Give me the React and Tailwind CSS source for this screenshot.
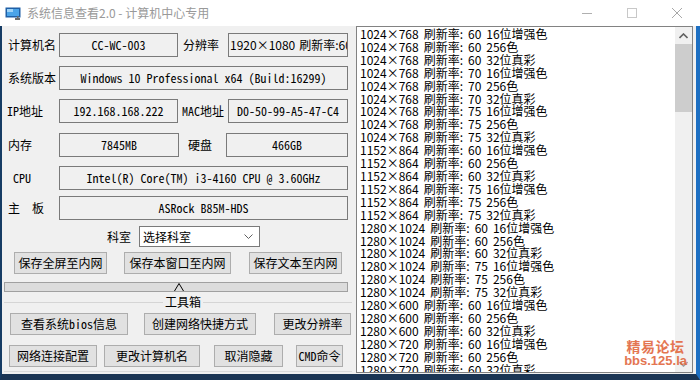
import React from "react";

const sans = "font-['Noto_Sans_CJK_SC',sans-serif]";
const mono = "font-['Noto_Sans_Mono_CJK_SC','DejaVu_Sans_Mono',monospace]";

const modes = [
  ["1024", "768", "60", "16位增强色"],
  ["1024", "768", "60", "256色"],
  ["1024", "768", "60", "32位真彩"],
  ["1024", "768", "70", "16位增强色"],
  ["1024", "768", "70", "256色"],
  ["1024", "768", "70", "32位真彩"],
  ["1024", "768", "75", "16位增强色"],
  ["1024", "768", "75", "256色"],
  ["1024", "768", "75", "32位真彩"],
  ["1152", "864", "60", "16位增强色"],
  ["1152", "864", "60", "256色"],
  ["1152", "864", "60", "32位真彩"],
  ["1152", "864", "75", "16位增强色"],
  ["1152", "864", "75", "256色"],
  ["1152", "864", "75", "32位真彩"],
  ["1280", "1024", "60", "16位增强色"],
  ["1280", "1024", "60", "256色"],
  ["1280", "1024", "60", "32位真彩"],
  ["1280", "1024", "75", "16位增强色"],
  ["1280", "1024", "75", "256色"],
  ["1280", "1024", "75", "32位真彩"],
  ["1280", "600", "60", "16位增强色"],
  ["1280", "600", "60", "256色"],
  ["1280", "600", "60", "32位真彩"],
  ["1280", "720", "60", "16位增强色"],
  ["1280", "720", "60", "256色"],
  ["1280", "720", "60", "32位真彩"],
];

function Box({ w, children, left }) {
  return (
    <div
      className={`${w} h-[24px] border border-[#7a7a7a] bg-[#f0f0f0] flex items-center overflow-hidden whitespace-nowrap ${
        left ? "justify-start pl-[1px]" : "justify-center"
      }`}
    >
      {children}
    </div>
  );
}

function Btn({ w, children }) {
  return (
    <div
      className={`${w} h-[22px] border border-[#adadad] bg-[#e1e1e1] flex items-center justify-center text-[12px] ${mono} whitespace-nowrap`}
    >
      {children}
    </div>
  );
}

function TitleIcon() {
  return (
    <svg width="16" height="14" viewBox="0 0 16 14">
      <rect x="0.5" y="0.5" width="15" height="10" fill="#1f5fa6" />
      <rect x="2" y="2" width="12" height="7" fill="#4aa3e8" />
      <rect x="2" y="2" width="6" height="3" fill="#9fd3f7" />
      <rect x="10" y="11" width="5" height="2" fill="#6b6b6b" />
      <rect x="12" y="9" width="1.5" height="3" fill="#6b6b6b" />
    </svg>
  );
}

export default function App() {
  return (
    <div className={`relative w-[700px] h-[380px] flex flex-col bg-[#1b3554] text-black ${sans}`}>
      {/* title bar */}
      <div className="h-[26px] bg-white flex items-center shrink-0">
        <div className="ml-[5px] mt-[1px]">
          <TitleIcon />
        </div>
        <div className="ml-[6px] text-[12px] text-[#999999] leading-none">
          系统信息查看2.0 - 计算机中心专用
        </div>
        <div className="ml-auto flex items-center h-full">
          <div className="w-[45px] h-full flex items-center justify-center">
            <div className="w-[10px] h-px bg-[#b0b0b0]" />
          </div>
          <div className="w-[45px] h-full flex items-center justify-center">
            <div className="w-[10px] h-[10px] border border-[#c8c8c8]" />
          </div>
          <div className="w-[46px] h-full flex items-center justify-center">
            <svg width="12" height="12" viewBox="0 0 12 12">
              <path d="M1 1L11 11M11 1L1 11" stroke="#a8a8a8" strokeWidth="1" />
            </svg>
          </div>
        </div>
      </div>

      {/* body */}
      <div className="flex-1 flex bg-[#f0f0f0] border-l-2 border-l-[#163c64] border-r-4 border-r-[#1d6fc2] border-b-[6px] border-b-[#1b3554]">
        {/* left panel */}
        <div className="w-[354px] shrink-0 flex flex-col text-[12px]">
          <div className="mt-[7px] h-[24px] flex items-center">
            <div className="w-[57px] pl-[6px]">计算机名</div>
            <Box w="w-[119px]">
              <span className={mono}>CC-WC-003</span>
            </Box>
            <div className="w-[50px] pl-[5px]">分辨率</div>
            <Box w="w-[120px]" left>
              <span>1920</span>
              <span className="inline-block w-[12px] text-center">×</span>
              <span>1080</span>
              <span className="ml-[4px]">刷新率:60</span>
            </Box>
          </div>

          <div className="mt-[9px] h-[24px] flex items-center">
            <div className="w-[57px] pl-[6px]">系统版本</div>
            <Box w="w-[289px]">
              <span className={mono}>Windows 10 Professional x64 (Build:16299)</span>
            </Box>
          </div>

          <div className="mt-[9px] h-[24px] flex items-center">
            <div className={`w-[57px] pl-[5px] ${mono}`}>IP地址</div>
            <Box w="w-[119px]">
              <span className={mono}>192.168.168.222</span>
            </Box>
            <div className={`w-[50px] pl-[4px] ${mono}`}>MAC地址</div>
            <Box w="w-[120px]">
              <span className={mono}>D0-50-99-A5-47-C4</span>
            </Box>
          </div>

          <div className="mt-[10px] h-[24px] flex items-center">
            <div className="w-[57px] pl-[6px]">内存</div>
            <Box w="w-[120px]">
              <span className={mono}>7845MB</span>
            </Box>
            <div className="w-[47px] pl-[9px]">硬盘</div>
            <Box w="w-[122px]">
              <span className={mono}>466GB</span>
            </Box>
          </div>

          <div className="mt-[9px] h-[24px] flex items-center">
            <div className={`w-[57px] pl-[11px] ${mono}`}>CPU</div>
            <Box w="w-[289px]">
              <span className={mono}>Intel(R) Core(TM) i3-4160 CPU @ 3.60GHz</span>
            </Box>
          </div>

          <div className="mt-[6px] h-[24px] flex items-center">
            <div className="w-[57px] pl-[6px] flex">
              <span>主</span>
              <span className="ml-[12px]">板</span>
            </div>
            <Box w="w-[289px]">
              <span className={mono}>ASRock B85M-HDS</span>
            </Box>
          </div>

          {/* department select */}
          <div className="mt-[6px] h-[21px] flex items-center">
            <div className="ml-[105px] w-[32px]">科室</div>
            <div className="w-[121px] h-[21px] bg-white border border-[#7a7a7a] flex items-center pl-[3px]">
              <span>选择科室</span>
              <svg className="ml-auto mr-[6px]" width="9" height="6" viewBox="0 0 9 6">
                <path d="M0.5 0.5L4.5 4.5L8.5 0.5" fill="none" stroke="#606060" strokeWidth="1" />
              </svg>
            </div>
          </div>

          <div className="mt-[5px] flex items-center">
            <div className="ml-[12px]">
              <Btn w="w-[93px]">保存全屏至内网</Btn>
            </div>
            <div className="ml-[17px]">
              <Btn w="w-[107px]">保存本窗口至内网</Btn>
            </div>
            <div className="ml-[18px]">
              <Btn w="w-[93px]">保存文本至内网</Btn>
            </div>
          </div>

          {/* splitter */}
          <div className="mt-[8px] ml-[2px] w-[344px] h-[10px] bg-[#dcdcdc] border border-[#a0a0a0] flex items-end justify-center">
            <svg width="10" height="8" viewBox="0 0 10 8" className="ml-[6px]">
              <path d="M0.5 8L5 0.5L9.5 8" fill="none" stroke="#000" strokeWidth="1" />
            </svg>
          </div>

          {/* group header */}
          <div className="mt-[2px] h-[16px] flex items-center">
            <div className="ml-[2px] w-[159px] h-px bg-[#d5d5d5]" />
            <div className="px-[2px] leading-none">工具箱</div>
            <div className="flex-1 mr-[4px] h-px bg-[#d5d5d5]" />
          </div>

          <div className="mt-[3px] flex items-center">
            <div className="ml-[8px]">
              <Btn w="w-[118px]">查看系统bios信息</Btn>
            </div>
            <div className="ml-[16px]">
              <Btn w="w-[112px]">创建网络快捷方式</Btn>
            </div>
            <div className="ml-[18px]">
              <Btn w="w-[77px]">更改分辨率</Btn>
            </div>
          </div>

          <div className="mt-[10px] flex items-center">
            <div className="ml-[7px]">
              <Btn w="w-[88px]">网络连接配置</Btn>
            </div>
            <div className="ml-[7px]">
              <Btn w="w-[96px]">更改计算机名</Btn>
            </div>
            <div className="ml-[14px]">
              <Btn w="w-[69px]">取消隐藏</Btn>
            </div>
            <div className="ml-[13px]">
              <Btn w="w-[47px]">CMD命令</Btn>
            </div>
          </div>

          <div className="mt-[4px] ml-[2px] mr-[4px] h-px bg-[#dadada]" />
        </div>

        {/* list box */}
        <div className="w-[337px] h-[347px] bg-white border border-[#828282] flex">
          <div className="flex-1 overflow-hidden pl-[3px] pt-[1px] text-[12px] leading-[12.9px] whitespace-nowrap">
            {modes.map((m, i) => (
              <div key={i} className="flex">
                <span>{m[0]}</span>
                <span className="inline-block w-[12px] text-center">×</span>
                <span>{m[1]}</span>
                <span className="ml-[5px]">刷新率:</span>
                <span className="ml-[5px]">{m[2]}</span>
                <span className="ml-[5px]">{m[3]}</span>
              </div>
            ))}
          </div>
          <div className="w-[17px] bg-[#f0f0f0] flex flex-col items-center">
            <div className="h-[17px] w-full flex items-center justify-center">
              <svg width="9" height="6" viewBox="0 0 9 6">
                <path d="M0.5 5L4.5 1L8.5 5" fill="none" stroke="#606060" strokeWidth="1.6" />
              </svg>
            </div>
            <div className="w-full h-[68px] bg-[#cdcdcd]" />
            <div className="mt-auto h-[17px] w-full flex items-center justify-center">
              <svg width="9" height="6" viewBox="0 0 9 6">
                <path d="M0.5 1L4.5 5L8.5 1" fill="none" stroke="#a0a0a0" strokeWidth="1.6" />
              </svg>
            </div>
          </div>
        </div>
      </div>

      {/* watermark */}
      <div className="absolute right-[13px] bottom-[12px] flex flex-col items-center text-[#e2683f] opacity-90">
        <div className="text-[14px] font-bold leading-[15px] tracking-[0.5px]">精易论坛</div>
        <div className="text-[13px] font-bold leading-[14px] font-['Liberation_Sans',sans-serif]">
          bbs.125.la
        </div>
      </div>
    </div>
  );
}
